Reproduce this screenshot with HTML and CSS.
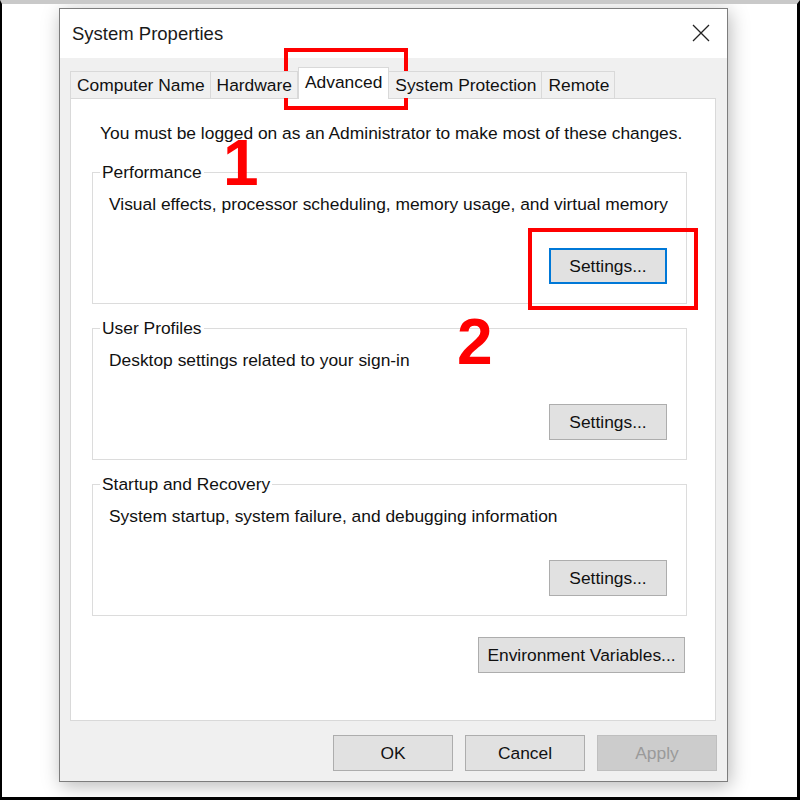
FILE: index.html
```html
<!DOCTYPE html>
<html lang="en">
<head>
  <meta charset="UTF-8">
  <title>System Properties</title>
  <link rel="stylesheet" href="styles.css">
</head>
<body>
  <div class="frame">
    <div class="dialog">
      <div class="titlebar">
        <span class="title">System Properties</span>
        <svg class="close" width="18" height="18" viewBox="0 0 18 18">
          <path d="M1 1 L17 17 M17 1 L1 17" stroke="#222" stroke-width="1.3" fill="none"/>
        </svg>
      </div>

      <div class="body">
        <div class="tabs">
          <div class="tab">Computer Name</div>
          <div class="tab">Hardware</div>
          <div class="tab active">Advanced</div>
          <div class="tab">System Protection</div>
          <div class="tab">Remote</div>
        </div>

        <div class="panel">
          <div class="notice">You must be logged on as an Administrator to make most of these changes.</div>

          <div class="group">
            <span class="legend">Performance</span>
            <div class="desc">Visual effects, processor scheduling, memory usage, and virtual memory</div>
            <button class="btn settings focused">Settings...</button>
          </div>

          <div class="group">
            <span class="legend">User Profiles</span>
            <div class="desc">Desktop settings related to your sign-in</div>
            <button class="btn settings">Settings...</button>
          </div>

          <div class="group">
            <span class="legend">Startup and Recovery</span>
            <div class="desc">System startup, system failure, and debugging information</div>
            <button class="btn settings">Settings...</button>
          </div>

          <div class="env-row">
            <button class="btn env">Environment Variables...</button>
          </div>
        </div>

        <div class="actions">
          <button class="btn action">OK</button>
          <button class="btn action">Cancel</button>
          <button class="btn action disabled">Apply</button>
        </div>
      </div>
    </div>

    <!-- annotations -->
    <div class="mark box-1"></div>
    <div class="mark box-2"></div>
    <div class="num num-1">1</div>
    <div class="num num-2">2</div>
  </div>
</body>
</html>
```

FILE: styles.css
```css
* { box-sizing: border-box; }
body { margin: 0; background: #fff; font-family: "Liberation Sans", Arial, sans-serif; color: #111; }

.frame { position: relative; width: 800px; height: 800px; background: #fff; border-left: 2px solid #000; border-right: 3px solid #000; border-bottom: 3px solid #000; border-top: 4px solid #c9c9c9; overflow: hidden; }

.dialog { margin: 4px 0 0 57px; width: 669px; height: 774px; border: 1px solid #7d7d7d; background: #f0f0f0; box-shadow: 2px 4px 18px rgba(0,0,0,0.28); display: flex; flex-direction: column; }

.titlebar { height: 49px; background: #fff; display: flex; align-items: center; justify-content: space-between; padding: 0 17px 0 12px; }
.title { font-size: 18.5px; color: #1a1a1a; margin-top: 1px; }
.close { margin-top: -2px; }

.body { flex: 1; padding: 9px 10px 0 10px; display: flex; flex-direction: column; }

.tabs { display: flex; align-items: flex-end; height: 31px; position: relative; z-index: 1; }
.tab { height: 27px; line-height: 26px; padding: 0 5px 0 6px; font-size: 17.4px; border: 1px solid #d9d9d9; border-bottom: none; margin-right: -1px; background: #f0f0f0; white-space: nowrap; }
.tab.active { height: 32px; line-height: 29px; background: #fff; margin: 0 -1px 0 1px; padding: 0 6px; position: relative; top: 1px; }

.panel { width: 646px; height: 623px; background: #fff; border: 1px solid #d9d9d9; padding: 24px 0 0 21px; }
.notice { font-size: 17.4px; line-height: 20px; margin-left: 8px; white-space: nowrap; }

.group { width: 595px; height: 132px; border: 1px solid #dcdcdc; margin-top: 29px; padding: 0 19px 19px 16px; display: flex; flex-direction: column; align-items: flex-start; }
.group + .group { margin-top: 24px; }
.legend { font-size: 17.4px; line-height: 20px; margin: -11px 0 0 -9px; padding: 0 2px; background: #fff; }
.desc { font-size: 17.4px; line-height: 20px; margin-top: 12px; white-space: nowrap; }

.btn { font-family: "Liberation Sans", Arial, sans-serif; font-size: 17.4px; color: #111; background: #e1e1e1; border: 1px solid #adadad; padding: 0; }
.settings { width: 118px; height: 36px; margin-top: auto; align-self: flex-end; }
.focused { border: 2px solid #0078d7; }

.env-row { width: 595px; display: flex; justify-content: flex-end; padding-right: 2px; margin-top: 21px; }
.env { width: 207px; height: 36px; }

.actions { display: flex; justify-content: flex-end; gap: 12px; margin-top: 14px; }
.action { width: 120px; height: 36px; }
.disabled { background: #cccccc; border-color: #bfbfbf; color: #9a9a9a; }

.mark { position: absolute; border: 4px solid #f00; }
.box-1 { left: 282px; top: 44px; width: 124px; height: 62px; }
.box-2 { left: 526px; top: 224px; width: 170px; height: 82px; }
.num { position: absolute; color: #f00; font-weight: bold; font-size: 64px; line-height: 1; }
.num-1 { left: 221px; top: 127px; }
.num-2 { left: 455px; top: 306px; }
```
